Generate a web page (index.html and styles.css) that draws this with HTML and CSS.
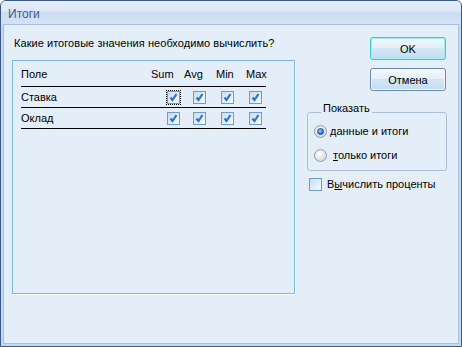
FILE: index.html
```html
<!DOCTYPE html>
<html>
<head>
    <title>Итоги</title>
    <link rel="stylesheet" href="styles.css">
</head>
<body>
    <div class="window">
        <div class="titlebar">Итоги</div>
        <div class="client">
            <div class="left-col">
                <div class="prompt">Какие итоговые значения необходимо вычислить?</div>
                <div class="listbox">
                    <div class="grid-head">
                        <span>Поле</span>
                        <span>Sum</span>
                        <span>Avg</span>
                        <span>Min</span>
                        <span>Max</span>
                    </div>
                    <div class="grid-row">
                        <span>Ставка</span>
                        <span class="chk checked focus"><svg viewBox="0 0 11 11"><path d="M2.5 5.5 L4.5 8 L8.5 2"/></svg></span>
                        <span class="chk checked"><svg viewBox="0 0 11 11"><path d="M2.5 5.5 L4.5 8 L8.5 2"/></svg></span>
                        <span class="chk checked"><svg viewBox="0 0 11 11"><path d="M2.5 5.5 L4.5 8 L8.5 2"/></svg></span>
                        <span class="chk checked"><svg viewBox="0 0 11 11"><path d="M2.5 5.5 L4.5 8 L8.5 2"/></svg></span>
                    </div>
                    <div class="grid-row">
                        <span>Оклад</span>
                        <span class="chk checked"><svg viewBox="0 0 11 11"><path d="M2.5 5.5 L4.5 8 L8.5 2"/></svg></span>
                        <span class="chk checked"><svg viewBox="0 0 11 11"><path d="M2.5 5.5 L4.5 8 L8.5 2"/></svg></span>
                        <span class="chk checked"><svg viewBox="0 0 11 11"><path d="M2.5 5.5 L4.5 8 L8.5 2"/></svg></span>
                        <span class="chk checked"><svg viewBox="0 0 11 11"><path d="M2.5 5.5 L4.5 8 L8.5 2"/></svg></span>
                    </div>
                </div>
            </div>
            <div class="right-col">
                <button class="btn btn-default">OK</button>
                <button class="btn btn-cancel">Отмена</button>
                <fieldset class="group">
                    <legend>Показать</legend>
                    <div class="radio-row">
                        <span class="radio selected"></span>
                        <span class="radio-label"><u>д</u>анные и итоги</span>
                    </div>
                    <div class="radio-row second">
                        <span class="radio"></span>
                        <span class="radio-label shifted"><u>т</u>олько итоги</span>
                    </div>
                </fieldset>
                <div class="check-row">
                    <span class="chk"></span>
                    <span>В<u>ы</u>числить проценты</span>
                </div>
            </div>
        </div>
    </div>
</body>
</html>
```

FILE: styles.css
```css
body {
    margin: 0;
    font-family: "Liberation Sans", Arial, sans-serif;
    font-size: 11px;
    color: #000;
    background-color: #fff;
}

.window {
    width: 462px;
    height: 347px;
    box-sizing: border-box;
    border: 1px solid #3b5a86;
    border-radius: 6px 6px 0 0;
    background-color: #c3d8f1;
    padding: 0 2px 2px;
    display: flex;
    flex-direction: column;
}

.titlebar {
    height: 23px;
    margin: 0 -2px;
    padding-left: 7px;
    border-radius: 5px 5px 0 0;
    background: linear-gradient(#e6eefa 0, #dbe6f6 45%, #cddcf1 50%, #d3e2f4 100%);
    color: #3c5b8c;
    font-size: 12px;
    line-height: 26px;
}

.client {
    flex: 1;
    display: flex;
    gap: 12px;
    border: 1px solid #a7c0e0;
    background-color: #e4eef9;
    padding: 0 11px 0 8px;
}

.left-col {
    width: 283px;
}

.prompt {
    margin: 11px 0 0 2px;
    line-height: 14px;
    letter-spacing: 0.05px;
}

.listbox {
    margin-top: 10px;
    height: 234px;
    box-sizing: border-box;
    border: 1px solid #7fb6e2;
    box-shadow: 1px 1px 0 #fff;
    padding: 6px 0 0 8px;
}

.grid-head {
    display: grid;
    grid-template-columns: 130px 33px 32px 30px 20px;
    width: 245px;
    line-height: 14px;
    padding-bottom: 5px;
    border-bottom: 1px solid #000;
}

.grid-row {
    display: grid;
    grid-template-columns: 146px 26px 28px 28px 17px;
    align-items: center;
    width: 245px;
    height: 20px;
    border-bottom: 1px solid #000;
}

.chk {
    width: 13px;
    height: 13px;
    box-sizing: border-box;
    border: 1px solid #6f9dcb;
    background: linear-gradient(135deg, #c9dcf0, #f6fafe);
    display: inline-flex;
    align-items: center;
    justify-content: center;
}

.chk svg {
    width: 11px;
    height: 11px;
    fill: none;
    stroke: #2a78c4;
    stroke-width: 2.2;
}

.chk.focus {
    outline: 1px dotted #000;
}

.right-col {
    width: 140px;
    display: flex;
    flex-direction: column;
    align-items: flex-start;
}

.btn {
    align-self: flex-end;
    margin-right: 1px;
    width: 76px;
    height: 23px;
    border-radius: 3px;
    font-family: "Liberation Sans", Arial, sans-serif;
    font-size: 11px;
    color: #000;
    padding: 0;
    background: linear-gradient(#f3f8fd 0, #e4eff9 45%, #d2e5f4 50%, #c6ddf0 100%);
}

.btn-default {
    margin-top: 12px;
    border: 1px solid #39cbc4;
    box-shadow: inset 0 0 0 1px #9ff0ea;
}

.btn-cancel {
    margin-top: 8px;
    border: 1px solid #6e88a8;
    box-shadow: inset 0 0 0 1px #f5f9fd;
}

.group {
    margin: 10px 0 0;
    width: 140px;
    box-sizing: border-box;
    border: 1px solid #aac0da;
    border-radius: 3px;
    padding: 0 0 7px 6px;
}

.group legend {
    margin-left: 7px;
    padding: 0 2px 8px;
    line-height: 14px;
}

.radio-row {
    display: flex;
    align-items: center;
    height: 16px;
}

.radio-row.second {
    margin-top: 8px;
}

.radio {
    width: 13px;
    height: 13px;
    box-sizing: border-box;
    border-radius: 50%;
    border: 1px solid #8e9bab;
    background: radial-gradient(circle at 40% 35%, #ffffff 0, #e6e6e6 50%, #c4c8cc 100%);
    display: inline-flex;
    align-items: center;
    justify-content: center;
}

.radio.selected::after {
    content: "";
    width: 5px;
    height: 5px;
    border-radius: 50%;
    border: 1px solid #0e4f8f;
    background: radial-gradient(circle at 35% 35%, #9fd6ff 0, #2f86d6 55%, #0b5aa5 100%);
}

.radio-label {
    margin-left: 3px;
}

.radio-label.shifted {
    margin-left: 6px;
}

.check-row {
    margin: 6px 0 0 2px;
    display: flex;
    align-items: center;
    gap: 5px;
    line-height: 14px;
}
```
